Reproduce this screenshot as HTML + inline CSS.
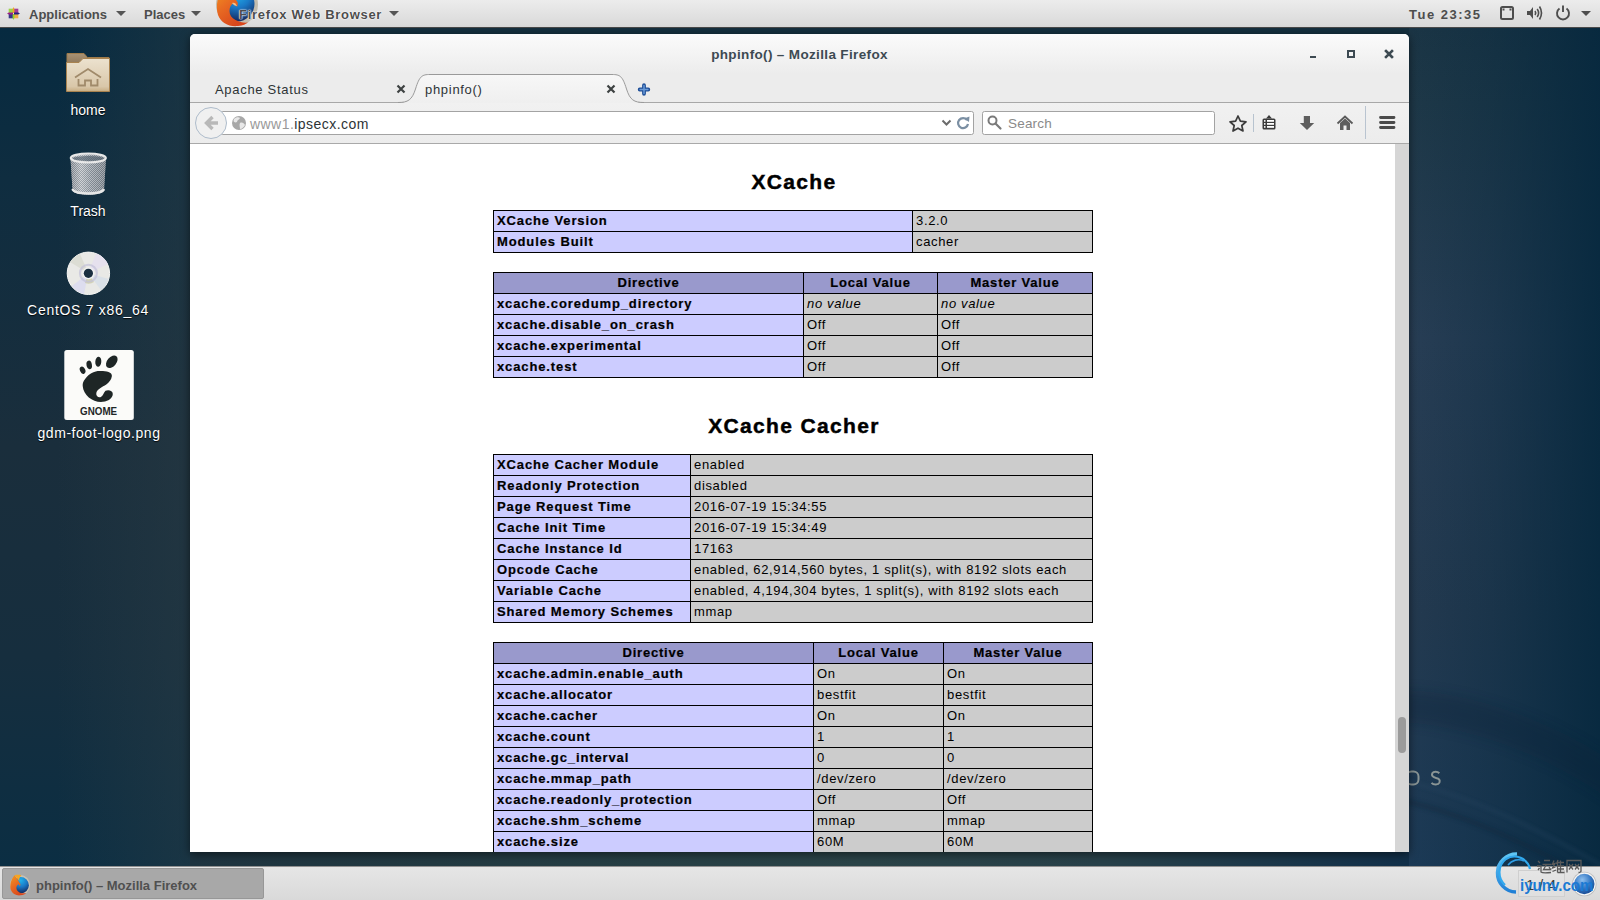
<!DOCTYPE html>
<html><head><meta charset="utf-8">
<style>
*{box-sizing:border-box}
html,body{margin:0;padding:0}
body{width:1600px;height:900px;overflow:hidden;position:relative;font-family:"Liberation Sans",sans-serif;
background:#14304a;}
.abs{position:absolute}
#bg{position:absolute;left:0;top:0;width:1600px;height:900px;background:#15303f}
#bgl{position:absolute;left:0;top:28px;width:190px;height:838px;
 background:
  linear-gradient(90deg, rgba(44,62,70,0) 30%, rgba(44,62,70,.45) 100%),
  linear-gradient(180deg,#062a40 0%,#0f2d40 18%,#1a2e3c 50%,#162e3e 75%,#0b2e43 100%);}
#bgr{position:absolute;left:1409px;top:28px;width:191px;height:838px;
 background:
  linear-gradient(90deg, rgba(6,40,62,0) 0%, rgba(6,40,62,.35) 45%, rgba(6,40,62,.9) 100%),
  linear-gradient(180deg,#1b3545 0%,#1e3848 9%,#283e55 37%,#243a50 70%,#1c3a56 100%);}
#bgb{position:absolute;left:190px;top:851px;width:1219px;height:15px;
 background:linear-gradient(90deg,#1e3440 0%,#233a42 20%,#2b4448 55%,#28414a 75%,#12304a 100%);}
#panel{position:absolute;left:0;top:0;width:1600px;height:28px;
 background:linear-gradient(#ececec,#d9d9d9);border-bottom:1px solid #4a4a4a;
 font-size:13px;color:#4d4d4d;font-weight:bold}
#panel span{position:absolute;top:7px;line-height:16px}
.tri{position:absolute;width:0;height:0;border-left:5px solid transparent;border-right:5px solid transparent;border-top:5px solid #2e3436}
.dlabel{position:absolute;color:#fff;font-size:14px;line-height:18px;text-align:center;text-shadow:0 1px 1px rgba(0,0,0,.9)}
#win{position:absolute;left:190px;top:34px;width:1219px;height:818px;background:#ececec;border-radius:5px 5px 0 0;
 box-shadow:0 2px 10px rgba(0,0,0,.55)}
#titlebar{position:absolute;left:0;top:0;width:1219px;height:40px;border-radius:5px 5px 0 0;
 background:linear-gradient(#fbfbfb,#ececec)}
.ttl{position:absolute;left:0;width:1219px;top:13px;text-align:center;font-size:13.5px;font-weight:bold;color:#3d4a52;letter-spacing:.35px;padding-left:0px}
.tabt{position:absolute;font-size:13px;color:#2e3436;letter-spacing:.7px;line-height:18px}
.urlt{position:absolute;font-size:14px;color:#2e3436;letter-spacing:.45px;line-height:18px}
.srcht{position:absolute;font-size:13.5px;color:#8a8a8a;letter-spacing:.2px;line-height:18px}
#content{position:absolute;left:0;top:110px;width:1205px;height:708px;background:#fff;overflow:hidden}
#sbar{position:absolute;left:1205px;top:110px;width:14px;height:708px;background:#d6d6d6}
.c{position:absolute;height:22px;border:1px solid #000;font-size:13px;line-height:21px;color:#000;white-space:nowrap;overflow:hidden;padding-left:3px;margin-top:0}
.c span{position:relative;top:-1px}
.e{background:#ccccff;font-weight:bold;letter-spacing:.88px;-webkit-text-stroke:.2px #000}
.v{background:#cccccc;letter-spacing:.65px}
.th{background:#9999cc;font-weight:bold;text-align:center;letter-spacing:.8px;padding-left:0;-webkit-text-stroke:.2px #000}
.h2{position:absolute;font-size:21px;line-height:21px;font-weight:bold;letter-spacing:1.35px;text-align:center;width:600px;color:#000;-webkit-text-stroke:.45px #000;padding-left:2px}
#taskbar{position:absolute;left:0;top:866px;width:1600px;height:34px;background:linear-gradient(#e6e6e6,#d9d9d9);border-top:1px solid #909090}
</style></head><body>
<div id="bg"></div><div id="bgl"></div><div id="bgr"></div><div id="bgb"></div>
<svg class="abs" style="left:1409px;top:28px" width="191" height="838" viewBox="1409 28 191 838">
  <defs><filter id="bl" x="-50%" y="-50%" width="200%" height="200%"><feGaussianBlur stdDeviation="6"/></filter>
  <filter id="bl2" x="-50%" y="-50%" width="200%" height="200%"><feGaussianBlur stdDeviation="2"/></filter></defs>
  <path d="M1400,690 C1460,690 1540,715 1610,760 L1610,800 C1540,750 1460,725 1400,722 Z" fill="#0b2238" opacity=".3" filter="url(#bl)"/>
  <path d="M1400,780 C1470,795 1540,830 1610,870" fill="none" stroke="#2a4a66" stroke-width="2" opacity=".5" filter="url(#bl2)"/>
  <path d="M1400,800 C1470,815 1540,850 1610,890" fill="none" stroke="#0a2036" stroke-width="5" opacity=".35" filter="url(#bl2)"/>
</svg>

<!-- top panel -->
<div id="panel">
  <svg class="abs" style="left:0;top:0" width="1600" height="27" viewBox="0 0 1600 27">
    <defs>
      <radialGradient id="ffglobe" cx="0.5" cy="0.2" r="0.8"><stop offset="0" stop-color="#22b3ea"/><stop offset="0.5" stop-color="#1a78c6"/><stop offset="1" stop-color="#14285e"/></radialGradient>
      <linearGradient id="ffox" x1="0" y1="0" x2="0.6" y2="1"><stop offset="0" stop-color="#f39a1f"/><stop offset="0.5" stop-color="#e86a22"/><stop offset="1" stop-color="#d8461c"/></linearGradient>
    </defs>
    <!-- centos logo -->
    <g transform="translate(13.5,13.5)">
      <rect x="-4.8" y="-4.8" width="4.3" height="4.3" fill="#8fd22a" opacity=".85"/>
      <rect x="0.5" y="-4.8" width="4.3" height="4.3" fill="#9a1f86" opacity=".85"/>
      <rect x="-4.8" y="0.5" width="4.3" height="4.3" fill="#23237e" opacity=".9"/>
      <rect x="0.5" y="0.5" width="4.3" height="4.3" fill="#f0a52a" opacity=".85"/>
      <path d="M0,-6.5 L-0.9,-4.6 V-0.5 H0.9 V-4.6 Z" fill="#f0a52a"/>
      <path d="M0,6.5 L-0.9,4.6 V0.5 H0.9 V4.6 Z" fill="#8fd22a"/>
      <path d="M-6.5,0 L-4.6,-0.9 H-0.5 V0.9 H-4.6 Z" fill="#9a1f86"/>
      <path d="M6.5,0 L4.6,-0.9 H0.5 V0.9 H4.6 Z" fill="#23237e"/>
    </g>
    <path d="M116,11 H126 L121,16 Z" fill="#555"/>
    <path d="M191,11 H201 L196,16 Z" fill="#555"/>
    <path d="M389,11 H399 L394,16 Z" fill="#555"/>
    <!-- firefox icon (clipped) -->
    <g>
      <circle cx="237" cy="4.5" r="21" fill="#c2bcae"/>
      <circle cx="237" cy="4" r="17.5" fill="url(#ffglobe)"/>
      <path d="M226,-16 C218,-8 215,6 218,15 C221,23 229,27 238,26 C243,25.5 246,24 248,22.5 C244,23 239,22 235.5,20 C231.5,18 229.5,15 229.5,11 C229.5,7 231,4.5 234,3 L237,7 C238.5,4 238,2 236,0 C234,-4 231,-10 226,-16 Z" fill="url(#ffox)"/>
      <path d="M232,3 C234,2 236,3 237,6 C235,6 233.5,5 232,3 Z" fill="#f4c089"/>
    </g>
    <!-- network -->
    <rect x="1501" y="7" width="12" height="12" rx="1.5" fill="none" stroke="#4d4d4d" stroke-width="2"/>
    <rect x="1502.5" y="8.5" width="2" height="2" fill="#4d4d4d"/><rect x="1509.5" y="8.5" width="2" height="2" fill="#4d4d4d"/>
    <!-- volume -->
    <path d="M1527,11 H1530 L1533,7 V19 L1530,15 H1527 Z" fill="#4d4d4d"/>
    <path d="M1535,11 Q1536.5,13 1535,15" stroke="#4d4d4d" stroke-width="1.6" fill="none"/>
    <path d="M1537.2,9 Q1540,13 1537.2,17" stroke="#4d4d4d" stroke-width="1.6" fill="none"/>
    <path d="M1539.5,6.5 Q1543.5,13 1539.5,19.5" stroke="#4d4d4d" stroke-width="1.6" fill="none"/>
    <!-- power -->
    <path d="M1559.5,8.6 A6,6 0 1 0 1566.5,8.6" stroke="#4d4d4d" stroke-width="1.9" fill="none"/>
    <path d="M1563,5.5 V12" stroke="#4d4d4d" stroke-width="1.9"/>
    <path d="M1581,11 H1591 L1586,16 Z" fill="#4d4d4d"/>
  </svg>
  <span style="left:29px">Applications</span>
  <span style="left:144px">Places</span>
  <span style="left:239px;letter-spacing:.7px;text-shadow:0 0 1px #fff,0 0 1px #fff,0 0 2px #fff">Firefox Web Browser</span>
  <span style="left:1409px;letter-spacing:1.5px">Tue 23:35</span>
</div>

<!-- desktop icons -->
<svg class="abs" style="left:0;top:28px" width="180" height="420" viewBox="0 28 180 420">
  <defs>
    <linearGradient id="fold" x1="0" y1="0" x2="0" y2="1"><stop offset="0" stop-color="#ece2cf"/><stop offset="0.85" stop-color="#d9c7a9"/><stop offset="1" stop-color="#c7ad83"/></linearGradient>
    <linearGradient id="foldb" x1="0" y1="0" x2="0" y2="1"><stop offset="0" stop-color="#a99274"/><stop offset="1" stop-color="#8a7254"/></linearGradient>
    <radialGradient id="disc" cx="0.45" cy="0.4" r="0.65"><stop offset="0" stop-color="#d6d3e6"/><stop offset="0.5" stop-color="#e6e6e0"/><stop offset="0.85" stop-color="#d4d6d8"/><stop offset="1" stop-color="#f4f4f2"/></radialGradient>
    <linearGradient id="trash" x1="0" y1="0" x2="1" y2="0"><stop offset="0" stop-color="#8f949a"/><stop offset="0.3" stop-color="#d8dadc"/><stop offset="0.55" stop-color="#aab0b6"/><stop offset="1" stop-color="#7d848b"/></linearGradient>
    <pattern id="mesh" width="2" height="2" patternUnits="userSpaceOnUse"><rect width="2" height="2" fill="#5a6470"/><rect width="1" height="1" fill="#d8dadd"/><rect x="1" y="1" width="1" height="1" fill="#d8dadd"/></pattern>
  </defs>
  <!-- home folder -->
  <path d="M67,53.5 H84 L87.5,57.5 H109 V66 H67 Z" fill="url(#foldb)" stroke="#9f7b4a" stroke-width="1"/>
  <path d="M66.5,62.5 H79 L83,58.5 H109.5 V91.5 H66.5 Z" fill="url(#fold)" stroke="#a98350" stroke-width="1"/>
  <path d="M75,77.5 L88,69 L101,77.5" fill="none" stroke="#a08a6a" stroke-width="1.8"/>
  <path d="M78.5,79 V85.5 H85 V80.5 H91 V85.5 H97.5 V79" fill="none" stroke="#a08a6a" stroke-width="1.8"/>
  <!-- trash -->
  <path d="M70.5,158 C70.5,152 106,152 106,158 L104,190 C104,196 72.5,196 72.5,190 Z" fill="url(#mesh)" opacity=".95"/>
  <path d="M70.5,158 C70.5,152 106,152 106,158 L104,190 C104,196 72.5,196 72.5,190 Z" fill="url(#trash)" opacity=".55"/>
  <ellipse cx="88.3" cy="158" rx="17.5" ry="4.5" fill="none" stroke="#e8e8e8" stroke-width="2.2"/>
  <ellipse cx="88.3" cy="158.5" rx="15" ry="2.6" fill="#4b5a68" opacity=".6"/>
  <path d="M72.5,189 C74,195 102,195 104,189" fill="none" stroke="#e6e6e6" stroke-width="2.4"/>
  <!-- disc -->
  <circle cx="88.4" cy="273.3" r="21.2" fill="#e9e9e6" stroke="#f7f7f5" stroke-width="1"/>
  <path d="M88.4,273.3 L70,262 A21,21 0 0 1 80,254 Z" fill="#d8d9cf" opacity=".8"/>
  <path d="M88.4,273.3 L96,253.5 A21,21 0 0 1 108,264 Z" fill="#e6e0ee" opacity=".9"/>
  <path d="M88.4,273.3 L108.5,279 A21,21 0 0 1 101,290 Z" fill="#d8e0e8" opacity=".9"/>
  <path d="M88.4,273.3 L84,294 A21,21 0 0 1 72,286 Z" fill="#dcdcf0" opacity=".9"/>
  <path d="M88.4,273.3 L94,282 A10,10 0 0 1 85,283 Z" fill="#c9c9a0" opacity=".7"/>
  <circle cx="88.4" cy="273.3" r="8.5" fill="none" stroke="#c2c0d8" stroke-width="2" opacity=".7"/>
  <circle cx="88.4" cy="273.3" r="6" fill="#f2f2f2"/>
  <circle cx="88.4" cy="273.3" r="4.6" fill="#1b3040"/>
  <!-- gnome logo -->
  <rect x="64.3" y="350" width="69.5" height="70" rx="2.5" fill="#fbfbf9"/>
  <g transform="translate(64.3,350)" fill="#1e2626">
    <ellipse cx="18.3" cy="20.2" rx="2.6" ry="3.8" transform="rotate(-25 18.3 20.2)"/>
    <ellipse cx="24.9" cy="14.9" rx="2.7" ry="4.3" transform="rotate(-10 24.9 14.9)"/>
    <ellipse cx="34" cy="11.7" rx="3" ry="5" transform="rotate(5 34 11.7)"/>
    <ellipse cx="47.5" cy="11.8" rx="4.6" ry="7.2" transform="rotate(40 47.5 11.8)"/>
    <path d="M21,28.7 C26,22 32,20.5 36.6,21 C42,21 48,22 47.6,26 C47,30 45,32 42,34.5 C38,37 33,39 32,43 C31.5,46 34,48 36.6,47 C39,46 39,43 41.2,40.8 C44,39.5 48.5,40.5 48.5,44 C48.5,49 42,52 36.6,52 C28,52 19,45 18.4,36 C18.2,33 19,31 21,28.7 Z"/>
    <text x="15.8" y="65" font-family="Liberation Sans" font-weight="bold" font-size="10.8" fill="#1e2626" textLength="37" lengthAdjust="spacingAndGlyphs">GNOME</text>
  </g>
</svg>
<div class="dlabel" style="left:28px;top:101px;width:120px">home</div>
<div class="dlabel" style="left:28px;top:202px;width:120px">Trash</div>
<div class="dlabel" style="left:18px;top:301px;width:140px;letter-spacing:.7px">CentOS 7 x86_64</div>
<div class="dlabel" style="left:19px;top:424px;width:160px;letter-spacing:.55px">gdm-foot-logo.png</div>

<svg id="wos" class="abs" style="left:1395px;top:760px" width="60" height="35" viewBox="1395 760 60 35">
  <rect x="1406.5" y="771.5" width="12" height="13" rx="5" fill="none" stroke="#8a9595" stroke-width="2"/>
  <path d="M1439.3,773.2 C1437.5,771.3 1433.5,771.3 1432.3,773.3 C1431.2,775.5 1432.8,777.3 1436,777.9 C1439.3,778.5 1440.3,780.3 1439.4,782.6 C1438.3,784.9 1433.5,785 1431.5,782.8" fill="none" stroke="#8a9595" stroke-width="2"/>
</svg>
<!-- firefox window -->
<div id="win">
  <div id="titlebar"></div><div class="abs" style="left:0;top:69px;width:1219px;height:41px;background:linear-gradient(#f1f1f1,#ececec)"></div>
  <div class="ttl">phpinfo() – Mozilla Firefox</div>
  <svg class="abs" style="left:0;top:0" width="1219" height="110" viewBox="0 0 1219 110">
    <!-- window controls -->
    <rect x="1120" y="22" width="6" height="2" fill="#3d4a52"/>
    <rect x="1158" y="17" width="6" height="6" fill="none" stroke="#3d4a52" stroke-width="2"/>
    <path d="M1196,17 L1202,23 M1202,17 L1196,23" stroke="#3d4a52" stroke-width="2.6" stroke-linecap="square"/>
    <!-- tab strip bottom line -->
    <path d="M0,68.5 H214" stroke="#a8a8a8" stroke-width="1"/>
    <path d="M448,68.5 H1219" stroke="#a8a8a8" stroke-width="1"/>
    <!-- active tab -->
    <path d="M208,69 C218,69 222,66 225.5,55 C229.5,42 232,40.5 240,40.5 L422,40.5 C430,40.5 432.5,42 436.5,55 C440,66 444,69 454,69 Z" fill="url(#tabg)"/>
    <path d="M208,68.5 C218,68.5 222,66 225.5,55 C229.5,42 232,40.5 240,40.5 L422,40.5 C430,40.5 432.5,42 436.5,55 C440,66 444,68.5 454,68.5" fill="none" stroke="#9a9a9a" stroke-width="1"/>
    <defs><linearGradient id="tabg" x1="0" y1="0" x2="0" y2="1"><stop offset="0" stop-color="#f7f7f7"/><stop offset="1" stop-color="#efefef"/></linearGradient></defs>
    <!-- tab close icons -->
    <path d="M207.5,51.5 L214.5,58.5 M214.5,51.5 L207.5,58.5" stroke="#3e4242" stroke-width="2.2"/>
    <path d="M417.5,51.5 L424.5,58.5 M424.5,51.5 L417.5,58.5" stroke="#3e4242" stroke-width="2.2"/>
    <!-- new tab plus -->
    <path d="M454,51.2 V59.8 M449.7,55.5 H458.3" stroke="#1f4f98" stroke-width="3.8" stroke-linecap="round"/>
    <path d="M454,51.6 V59.4 M450.1,55.5 H457.9" stroke="#6a9ad6" stroke-width="1.5" stroke-linecap="round"/>
    <!-- navbar bottom line -->
    <path d="M0,109.5 H1219" stroke="#a9a9a9" stroke-width="1"/>
    <!-- url bar -->
    <rect x="30.5" y="77.5" width="753" height="23" rx="2" fill="#fff" stroke="#a3a3a3"/>
    <rect x="792.5" y="77.5" width="232" height="23" rx="2" fill="#fff" stroke="#a3a3a3"/>
    <!-- back button -->
    <circle cx="21" cy="89" r="15.5" fill="#f0f0f0" stroke="#aebccb" stroke-width="1"/>
    <path d="M16.5,89 H28 M22.5,83 L16.5,89 L22.5,95" fill="none" stroke="#b8b8b8" stroke-width="3.4" stroke-linejoin="miter"/>
    <!-- globe -->
    <circle cx="49" cy="89" r="7" fill="#a8a8a8"/>
    <path d="M44,85 C46,83 49,83 50,84 C49,86 47,86 47,88 C45,89 44,88 43.5,87 Z M50,89 C52,88 54,89 55,91 C54,93 52,95 50,95 C50,93 49,91 50,89 Z" fill="#e8e8e8"/>
    <!-- chevron + reload -->
    <path d="M752.5,86.5 L756.5,90.5 L760.5,86.5" fill="none" stroke="#6b6b6b" stroke-width="2"/>
    <path d="M777,86 A5,5 0 1 0 778,90" fill="none" stroke="#7b8fa3" stroke-width="2.2"/>
    <path d="M774,84.5 L779.5,82.5 L779,88 Z" fill="#7b8fa3"/>
    <!-- magnifier -->
    <circle cx="802.5" cy="86.5" r="4" fill="none" stroke="#7a7a7a" stroke-width="2"/>
    <path d="M805.5,89.5 L810.5,94.5" stroke="#7a7a7a" stroke-width="2.2" stroke-linecap="round"/>
    <!-- star -->
    <path d="M1048,82 L1050.4,87.2 L1056,87.8 L1051.8,91.5 L1053,97 L1048,94.2 L1043,97 L1044.2,91.5 L1040,87.8 L1045.6,87.2 Z" fill="none" stroke="#3c3c3c" stroke-width="1.7" stroke-linejoin="round"/>
    <path d="M1063.5,80 V98" stroke="#b7c3cf" stroke-width="1"/>
    <!-- library -->
    <rect x="1072.5" y="84.5" width="13" height="11" rx="1.5" fill="#3a3a3a"/>
    <path d="M1076,84.5 L1079,81 L1082,84.5 Z" fill="#3a3a3a"/>
    <rect x="1074" y="86" width="1.5" height="1.8" fill="#eee"/><rect x="1074" y="89" width="1.5" height="1.8" fill="#eee"/><rect x="1074" y="92" width="1.5" height="1.8" fill="#eee"/>
    <rect x="1077" y="86" width="7" height="1.8" fill="#fff"/><rect x="1077" y="89" width="7" height="1.8" fill="#fff"/><rect x="1077" y="92" width="7" height="1.8" fill="#fff"/>
    <!-- download -->
    <path d="M1113.8,82 H1120 V89 H1124.2 L1117,96 L1109.8,89 H1113.8 Z" fill="#5e5e5e"/>
    <!-- home -->
    <path d="M1147.5,89.5 L1155,82.5 L1162.5,89.5" fill="none" stroke="#5a5a5a" stroke-width="1.8"/>
    <path d="M1150,89 L1155,84.5 L1160,89 V96 H1156.5 V91.5 H1153.5 V96 H1150 Z" fill="#5e5e5e"/>
    <path d="M1175.5,72 V105" stroke="#b9c4d0" stroke-width="1"/>
    <!-- menu -->
    <path d="M1190.5,83.5 H1204 M1190.5,88.5 H1204 M1190.5,93.5 H1204" stroke="#4b4b4b" stroke-width="2.8" stroke-linecap="round"/>
  </svg>
  <div class="tabt" style="left:25px;top:47px">Apache Status</div>
  <div class="tabt" style="left:235px;top:47px">phpinfo()</div>
  <div class="urlt" style="left:60px;top:81px"><span style="color:#999">www1.</span>ipsecx.com</div>
  <div class="srcht" style="left:818px;top:81px">Search</div>
  <div id="content">
<div class="c e" style="left:303px;top:66px;width:420px"><span>XCache Version</span></div>
<div class="c v" style="left:722px;top:66px;width:181px"><span>3.2.0</span></div>
<div class="c e" style="left:303px;top:87px;width:420px"><span>Modules Built</span></div>
<div class="c v" style="left:722px;top:87px;width:181px"><span>cacher</span></div>
<div class="c th" style="left:303px;top:128px;width:311px"><span>Directive</span></div>
<div class="c th" style="left:613px;top:128px;width:135px"><span>Local Value</span></div>
<div class="c th" style="left:747px;top:128px;width:156px"><span>Master Value</span></div>
<div class="c e" style="left:303px;top:149px;width:311px"><span>xcache.coredump_directory</span></div>
<div class="c v" style="left:613px;top:149px;width:135px"><span style="font-style:italic">no value</span></div>
<div class="c v" style="left:747px;top:149px;width:156px"><span style="font-style:italic">no value</span></div>
<div class="c e" style="left:303px;top:170px;width:311px"><span>xcache.disable_on_crash</span></div>
<div class="c v" style="left:613px;top:170px;width:135px"><span>Off</span></div>
<div class="c v" style="left:747px;top:170px;width:156px"><span>Off</span></div>
<div class="c e" style="left:303px;top:191px;width:311px"><span>xcache.experimental</span></div>
<div class="c v" style="left:613px;top:191px;width:135px"><span>Off</span></div>
<div class="c v" style="left:747px;top:191px;width:156px"><span>Off</span></div>
<div class="c e" style="left:303px;top:212px;width:311px"><span>xcache.test</span></div>
<div class="c v" style="left:613px;top:212px;width:135px"><span>Off</span></div>
<div class="c v" style="left:747px;top:212px;width:156px"><span>Off</span></div>
<div class="c e" style="left:303px;top:310px;width:198px"><span>XCache Cacher Module</span></div>
<div class="c v" style="left:500px;top:310px;width:403px"><span>enabled</span></div>
<div class="c e" style="left:303px;top:331px;width:198px"><span>Readonly Protection</span></div>
<div class="c v" style="left:500px;top:331px;width:403px"><span>disabled</span></div>
<div class="c e" style="left:303px;top:352px;width:198px"><span>Page Request Time</span></div>
<div class="c v" style="left:500px;top:352px;width:403px"><span>2016-07-19 15:34:55</span></div>
<div class="c e" style="left:303px;top:373px;width:198px"><span>Cache Init Time</span></div>
<div class="c v" style="left:500px;top:373px;width:403px"><span>2016-07-19 15:34:49</span></div>
<div class="c e" style="left:303px;top:394px;width:198px"><span>Cache Instance Id</span></div>
<div class="c v" style="left:500px;top:394px;width:403px"><span>17163</span></div>
<div class="c e" style="left:303px;top:415px;width:198px"><span>Opcode Cache</span></div>
<div class="c v" style="left:500px;top:415px;width:403px"><span>enabled, 62,914,560 bytes, 1 split(s), with 8192 slots each</span></div>
<div class="c e" style="left:303px;top:436px;width:198px"><span>Variable Cache</span></div>
<div class="c v" style="left:500px;top:436px;width:403px"><span>enabled, 4,194,304 bytes, 1 split(s), with 8192 slots each</span></div>
<div class="c e" style="left:303px;top:457px;width:198px"><span>Shared Memory Schemes</span></div>
<div class="c v" style="left:500px;top:457px;width:403px"><span>mmap</span></div>
<div class="c th" style="left:303px;top:498px;width:321px"><span>Directive</span></div>
<div class="c th" style="left:623px;top:498px;width:131px"><span>Local Value</span></div>
<div class="c th" style="left:753px;top:498px;width:150px"><span>Master Value</span></div>
<div class="c e" style="left:303px;top:519px;width:321px"><span>xcache.admin.enable_auth</span></div>
<div class="c v" style="left:623px;top:519px;width:131px"><span>On</span></div>
<div class="c v" style="left:753px;top:519px;width:150px"><span>On</span></div>
<div class="c e" style="left:303px;top:540px;width:321px"><span>xcache.allocator</span></div>
<div class="c v" style="left:623px;top:540px;width:131px"><span>bestfit</span></div>
<div class="c v" style="left:753px;top:540px;width:150px"><span>bestfit</span></div>
<div class="c e" style="left:303px;top:561px;width:321px"><span>xcache.cacher</span></div>
<div class="c v" style="left:623px;top:561px;width:131px"><span>On</span></div>
<div class="c v" style="left:753px;top:561px;width:150px"><span>On</span></div>
<div class="c e" style="left:303px;top:582px;width:321px"><span>xcache.count</span></div>
<div class="c v" style="left:623px;top:582px;width:131px"><span>1</span></div>
<div class="c v" style="left:753px;top:582px;width:150px"><span>1</span></div>
<div class="c e" style="left:303px;top:603px;width:321px"><span>xcache.gc_interval</span></div>
<div class="c v" style="left:623px;top:603px;width:131px"><span>0</span></div>
<div class="c v" style="left:753px;top:603px;width:150px"><span>0</span></div>
<div class="c e" style="left:303px;top:624px;width:321px"><span>xcache.mmap_path</span></div>
<div class="c v" style="left:623px;top:624px;width:131px"><span>/dev/zero</span></div>
<div class="c v" style="left:753px;top:624px;width:150px"><span>/dev/zero</span></div>
<div class="c e" style="left:303px;top:645px;width:321px"><span>xcache.readonly_protection</span></div>
<div class="c v" style="left:623px;top:645px;width:131px"><span>Off</span></div>
<div class="c v" style="left:753px;top:645px;width:150px"><span>Off</span></div>
<div class="c e" style="left:303px;top:666px;width:321px"><span>xcache.shm_scheme</span></div>
<div class="c v" style="left:623px;top:666px;width:131px"><span>mmap</span></div>
<div class="c v" style="left:753px;top:666px;width:150px"><span>mmap</span></div>
<div class="c e" style="left:303px;top:687px;width:321px"><span>xcache.size</span></div>
<div class="c v" style="left:623px;top:687px;width:131px"><span>60M</span></div>
<div class="c v" style="left:753px;top:687px;width:150px"><span>60M</span></div>
<div class="c e" style="left:303px;top:708px;width:321px"><span>xcache.slots</span></div>
<div class="c v" style="left:623px;top:708px;width:131px"><span>8K</span></div>
<div class="c v" style="left:753px;top:708px;width:150px"><span>8K</span></div>
<div class="h2" style="left:303px;top:27px">XCache</div>
<div class="h2" style="left:303px;top:271px">XCache Cacher</div>
</div><!--/content-->
  <div id="sbar"><div class="abs" style="left:3px;top:573px;width:8px;height:36px;border-radius:4px;background:#9b9b9b"></div></div>
</div>

<div id="taskbar">
  <div class="abs" style="left:2px;top:1px;width:262px;height:31px;background:#a8a8a8;border:1px solid #979797;border-radius:2px"></div>
  <svg class="abs" style="left:0;top:0" width="40" height="34" viewBox="0 866 40 34">
    <g transform="translate(20,884) scale(0.48) translate(-237,-4.5)">
      <circle cx="237" cy="4.5" r="21" fill="#c9c2b4"/>
      <circle cx="238.5" cy="5" r="17" fill="url(#ffglobe)"/>
      <path d="M226,-16 C218,-8 215,6 218,15 C221,23 229,27 238,26 C244,25.5 248,23 250,20.5 C246,22.5 240,22 236,20 C232,18 229.5,15 229.5,11 C229.5,7 231,4.5 234,3 L237,7 C238.5,4 238,2 236,0 C234,-4 231,-10 226,-16 Z" fill="url(#ffox)"/>
      <path d="M226,-16 C230,-17 236,-17 240,-16 C236,-12 234,-8 236,-4 C232,-8 229,-12 226,-16 Z" fill="#f6a623"/>
    </g>
  </svg>
  <div class="abs" style="left:36px;top:11px;font-size:13px;font-weight:bold;color:#505050;line-height:16px">phpinfo() – Mozilla Firefox</div>
</div>
<!-- watermark -->
<div class="abs" style="left:1518px;top:870px;width:47px;height:27px;border:1px solid #cfcfcf;background:rgba(230,230,230,.4)"></div>
<svg class="abs" style="left:1480px;top:845px" width="120" height="55" viewBox="0 0 120 55">
  <defs><linearGradient id="arc" x1="0" y1="0" x2="0" y2="1"><stop offset="0" stop-color="#5fc6f5"/><stop offset="1" stop-color="#1f7fd6"/></linearGradient>
  <radialGradient id="ball" cx="0.4" cy="0.3" r="0.7"><stop offset="0" stop-color="#8fc0ee"/><stop offset="0.6" stop-color="#3377c4"/><stop offset="1" stop-color="#1d4f98"/></radialGradient></defs>
  <path d="M37,9 A19,19 0 1 0 36,47" fill="none" stroke="url(#arc)" stroke-width="3.5"/>
  <path d="M50,24 A16,16 0 0 0 26,14 A17,17 0 0 0 25,40" fill="none" stroke="#31a9ee" stroke-width="2.2"/>
  <path d="M44,16 A13,13 0 0 0 28,20" fill="none" stroke="#2e9ee6" stroke-width="1.6"/>
  <g stroke="#5a5a5a" stroke-width="1.3" fill="none">
    <path d="M58,16 L60,18 M57,21 H61 V27 C62,28 66,28 71,27.5 M59.5,23 L58,25"/>
    <path d="M64,15.5 H70 M62.5,19.5 H71.5 M66.5,19.5 L63.5,24.5 H70.5 M69,22 L71,25"/>
    <path d="M74,15.5 L72.5,19 L75,18.5 L72.5,23 L75.5,22 M72.5,26.5 L76,25 M78,15 L76.5,19 M77.5,17.5 V27.5 M77.5,17.5 H84 M80.5,15.5 V27.5 M77.5,21 H84 M77.5,24 H84 M77.5,27.5 H84.5"/>
    <path d="M87,27.5 V15.5 H101 V26 C101,27.5 100,27.5 98.5,27.5 M89,19 L93,24.5 M93,19 L89,24.5 M95,19 L99,24.5 M99,19 L95,24.5"/>
  </g>
  <circle cx="104.3" cy="39" r="12.2" fill="#9a9a9a" opacity=".5"/><circle cx="104.3" cy="39" r="11.4" fill="#f6f6f6"/>
  <circle cx="104.3" cy="39" r="10.2" fill="url(#ball)"/>
  <text x="46" y="45" font-family="Liberation Sans" font-size="15" fill="#3a3a3a" textLength="30" lengthAdjust="spacing">1/4</text>
  <text x="40" y="46" font-family="Liberation Sans" font-weight="bold" font-size="17" fill="#1a7ad4" textLength="73.5" lengthAdjust="spacingAndGlyphs">iyunv.com</text>
</svg>

</body></html>
